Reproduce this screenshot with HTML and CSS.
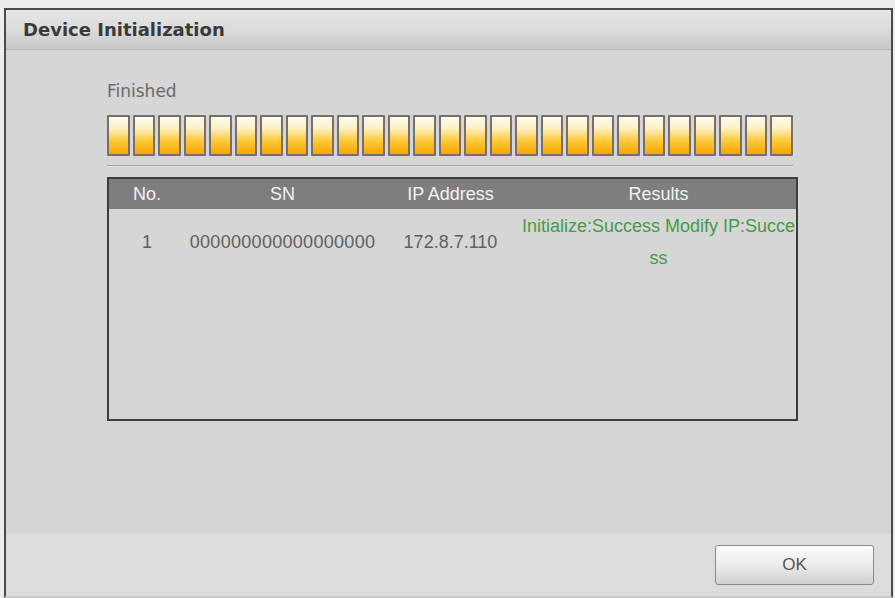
FILE: index.html
```html
<!DOCTYPE html>
<html>
<head>
<meta charset="utf-8">
<title>Device Initialization</title>
<link rel="stylesheet" href="styles.css">
</head>
<body>
<div class="dialog">
  <div class="titlebar">Device Initialization</div>
  <div class="content">
    <div class="status">Finished</div>
    <div class="progress">
      <span></span><span></span><span></span><span></span><span></span><span></span><span></span><span></span><span></span>
      <span></span><span></span><span></span><span></span><span></span><span></span><span></span><span></span><span></span>
      <span></span><span></span><span></span><span></span><span></span><span></span><span></span><span></span><span></span>
    </div>
    <div class="sep"></div>
    <div class="table">
      <div class="thead">
        <div>No.</div>
        <div>SN</div>
        <div>IP Address</div>
        <div>Results</div>
      </div>
      <div class="trow">
        <div>1</div>
        <div class="sn">000000000000000000</div>
        <div>172.8.7.110</div>
        <div class="result">Initialize:Success Modify IP:Success</div>
      </div>
    </div>
  </div>
  <div class="footer">
    <button class="btn">OK</button>
  </div>
</div>
</body>
</html>
```

FILE: styles.css
```css
html, body {
  margin: 0;
  padding: 0;
}
body {
  background: #ededed;
  width: 895px;
  height: 598px;
  overflow: hidden;
}
.dialog {
  margin: 8px 0 0 4px;
  width: 889px;
  height: 590px;
  border: 2px solid #4a4a4a;
  border-bottom-color: #c8c8c8;
  background: #d6d6d6;
  display: flex;
  flex-direction: column;
  box-sizing: border-box;
}
.titlebar {
  height: 40px;
  flex: none;
  box-sizing: border-box;
  border-bottom: 1px solid #b6b6b6;
  background: linear-gradient(to bottom, #e6e6e6 0%, #dadada 55%, #c6c6c6 100%);
  display: flex;
  align-items: center;
  padding-left: 17px;
  font-family: "DejaVu Sans", Verdana, sans-serif;
  font-weight: bold;
  font-size: 18px;
  color: #3a3a3a;
}
.content {
  flex: 1;
  padding: 31px 0 0 101px;
  box-sizing: border-box;
}
.status {
  font-family: "DejaVu Sans", Verdana, sans-serif;
  font-size: 17px;
  line-height: 20px;
  color: #6a6a6a;
}
.progress {
  margin-top: 14px;
  width: 686px;
  height: 41px;
  display: flex;
  gap: 3px;
}
.progress span {
  flex: 1;
  box-sizing: border-box;
  border: 2px solid #767068;
  border-radius: 1px;
  background: linear-gradient(to bottom, #fdfbf2 0%, #fdf0c4 30%, #fdc838 65%, #f6a800 100%);
}
.sep {
  margin-top: 9px;
  width: 686px;
  height: 1px;
  background: #a4a4a4;
  border-bottom: 1px solid #e2e2e2;
}
.table {
  margin-top: 10px;
  width: 691px;
  height: 244px;
  box-sizing: border-box;
  border: 2px solid #3e3e3e;
  font-family: "Liberation Sans", Arial, sans-serif;
  font-size: 18px;
}
.thead, .trow {
  display: grid;
  grid-template-columns: 76px 195px 141px 275px;
}
.thead {
  height: 30px;
  background: #7e7e7e;
  color: #f2f2f2;
  align-items: center;
  text-align: center;
}
.trow {
  color: #606060;
  align-items: center;
  text-align: center;
}
.trow > div {
  line-height: 32px;
}
.trow .sn {
  letter-spacing: 0.3px;
}
.trow .result {
  color: #449c44;
  word-break: break-all;
  padding-top: 1px;
}
.footer {
  height: 64px;
  flex: none;
  background: #dcdcdc;
  border-top: 1px solid #d2d2d2;
  display: flex;
  justify-content: flex-end;
  padding: 12px 17px 0 0;
  box-sizing: border-box;
}
.btn {
  width: 159px;
  height: 40px;
  border: 1px solid #8a8a8a;
  border-radius: 3px;
  background: linear-gradient(to bottom, #fbfbfb 0%, #ececec 50%, #cfcfcf 100%);
  font-family: "Liberation Sans", Arial, sans-serif;
  font-size: 17px;
  color: #555;
  padding: 0;
}
```
